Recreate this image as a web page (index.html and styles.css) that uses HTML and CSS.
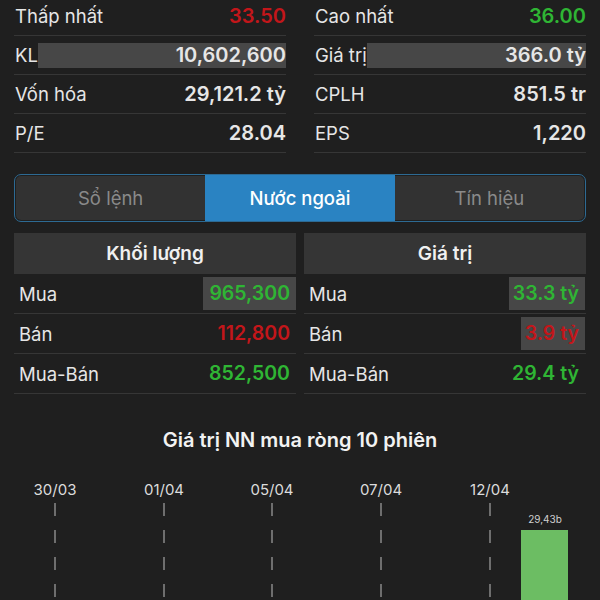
FILE: index.html
```html
<!DOCTYPE html>
<html lang="vi">
<head>
    <meta charset="UTF-8">
    <meta name="viewport" content="width=device-width, initial-scale=1.0">
    <title>Nước ngoài</title>
    <link rel="stylesheet" href="styles.css">
</head>
<body>
    <div class="stats">
        <div class="col">
            <div class="row"><span>Thấp nhất</span><b class="red">33.50</b></div>
            <div class="row"><span>KL</span><b class="bar">10,602,600</b></div>
            <div class="row"><span>Vốn hóa</span><b>29,121.2 tỷ</b></div>
            <div class="row"><span>P/E</span><b>28.04</b></div>
        </div>
        <div class="col">
            <div class="row"><span>Cao nhất</span><b class="green">36.00</b></div>
            <div class="row"><span>Giá trị</span><b class="bar">366.0 tỷ</b></div>
            <div class="row"><span>CPLH</span><b>851.5 tr</b></div>
            <div class="row"><span>EPS</span><b>1,220</b></div>
        </div>
    </div>

    <div class="tabs">
        <div class="tab">Sổ lệnh</div>
        <div class="tab active">Nước ngoài</div>
        <div class="tab">Tín hiệu</div>
    </div>

    <div class="foreign">
        <div class="table">
            <div class="head">Khối lượng</div>
            <div class="trow"><span>Mua</span><b class="green hl">965,300</b></div>
            <div class="trow"><span>Bán</span><b class="red">112,800</b></div>
            <div class="trow"><span>Mua-Bán</span><b class="green">852,500</b></div>
        </div>
        <div class="table">
            <div class="head">Giá trị</div>
            <div class="trow"><span>Mua</span><b class="green hl">33.3 tỷ</b></div>
            <div class="trow"><span>Bán</span><b class="red hl">3.9 tỷ</b></div>
            <div class="trow"><span>Mua-Bán</span><b class="green">29.4 tỷ</b></div>
        </div>
    </div>

    <h2 class="chart-title">Giá trị NN mua ròng 10 phiên</h2>

    <svg class="chart" width="600" height="142" viewBox="0 0 600 142">
        <g class="dates">
            <text x="55" y="37">30/03</text>
            <text x="164" y="37">01/04</text>
            <text x="272" y="37">05/04</text>
            <text x="381" y="37">07/04</text>
            <text x="490" y="37">12/04</text>
        </g>
        <g class="grid">
            <line x1="55" y1="45" x2="55" y2="142"/>
            <line x1="164" y1="45" x2="164" y2="142"/>
            <line x1="272" y1="45" x2="272" y2="142"/>
            <line x1="381" y1="45" x2="381" y2="142"/>
            <line x1="490" y1="45" x2="490" y2="142"/>
        </g>
        <text class="bar-label" x="545" y="65">29,43b</text>
        <rect class="bar-fill" x="521" y="72" width="47" height="70"/>
    </svg>
</body>
</html>
```

FILE: styles.css
```css
body {
    margin: 0;
    background: #1f1f1f;
    color: #e6e6e6;
    font-family: Inter, "Noto Sans", sans-serif;
    width: 600px;
    height: 600px;
    overflow: hidden;
}

.red { color: #c3161a; }
.green { color: #2fb534; }

.stats {
    display: flex;
    gap: 28px;
    padding: 0 14px;
    margin-top: -3px;
}

.col {
    flex: 1;
}

.row {
    display: flex;
    justify-content: space-between;
    align-items: center;
    height: 38px;
    border-bottom: 1px solid #363636;
    font-size: 18.5px;
}

.row span {
    padding-left: 1px;
}

.row b {
    font-size: 20px;
    font-weight: 600;
}

.row b.bar {
    flex: 1;
    text-align: right;
    background: #474747;
    line-height: 25px;
}

.tabs {
    display: flex;
    margin: 21px 14px 0;
    height: 44px;
    padding: 1px;
    border: 1px solid #2d6a93;
    border-radius: 7px;
    overflow: hidden;
}

.tab {
    flex: 1;
    display: flex;
    align-items: center;
    justify-content: center;
    background: #323232;
    color: #8a8a8a;
    font-size: 18.5px;
}

.tab:first-child {
    border-radius: 5px 0 0 5px;
}

.tab:last-child {
    border-radius: 0 5px 5px 0;
}

.tab.active {
    background: #2a83c2;
    color: #fff;
    font-weight: 500;
    margin: -1px 0;
}

.foreign {
    display: flex;
    gap: 8px;
    padding: 0 14px;
    margin-top: 11px;
}

.table {
    flex: 1;
}

.head {
    height: 41px;
    background: #353535;
    display: flex;
    align-items: center;
    justify-content: center;
    font-size: 19px;
    font-weight: 600;
    color: #f0f0f0;
}

.trow {
    display: flex;
    justify-content: space-between;
    align-items: center;
    height: 39px;
    border-bottom: 1px solid #363636;
    padding-left: 5px;
    font-size: 18.5px;
}

.trow:first-of-type {
    height: 40px;
}

.trow b {
    font-size: 19.5px;
    font-weight: 600;
    line-height: 33px;
    padding: 0 6px 0 4px;
}

.trow b.hl {
    background: #474747;
}

.table:first-child .trow b.hl {
    min-width: 83px;
    text-align: right;
}

.table:last-child .trow b {
    margin-right: 1px;
}

.chart-title {
    margin: 34px 0 0;
    text-align: center;
    font-size: 20px;
    font-weight: 600;
    color: #f2f2f2;
}

.chart {
    display: block;
    margin-top: 6px;
}

.dates text {
    fill: #dcdcdc;
    font-size: 15px;
    text-anchor: middle;
}

.grid line {
    stroke: #6e6e6e;
    stroke-width: 2;
    stroke-dasharray: 13 14;
}

.bar-label {
    fill: #cfcfcf;
    font-size: 10px;
    text-anchor: middle;
}

.bar-fill {
    fill: #6cbd63;
}
```
